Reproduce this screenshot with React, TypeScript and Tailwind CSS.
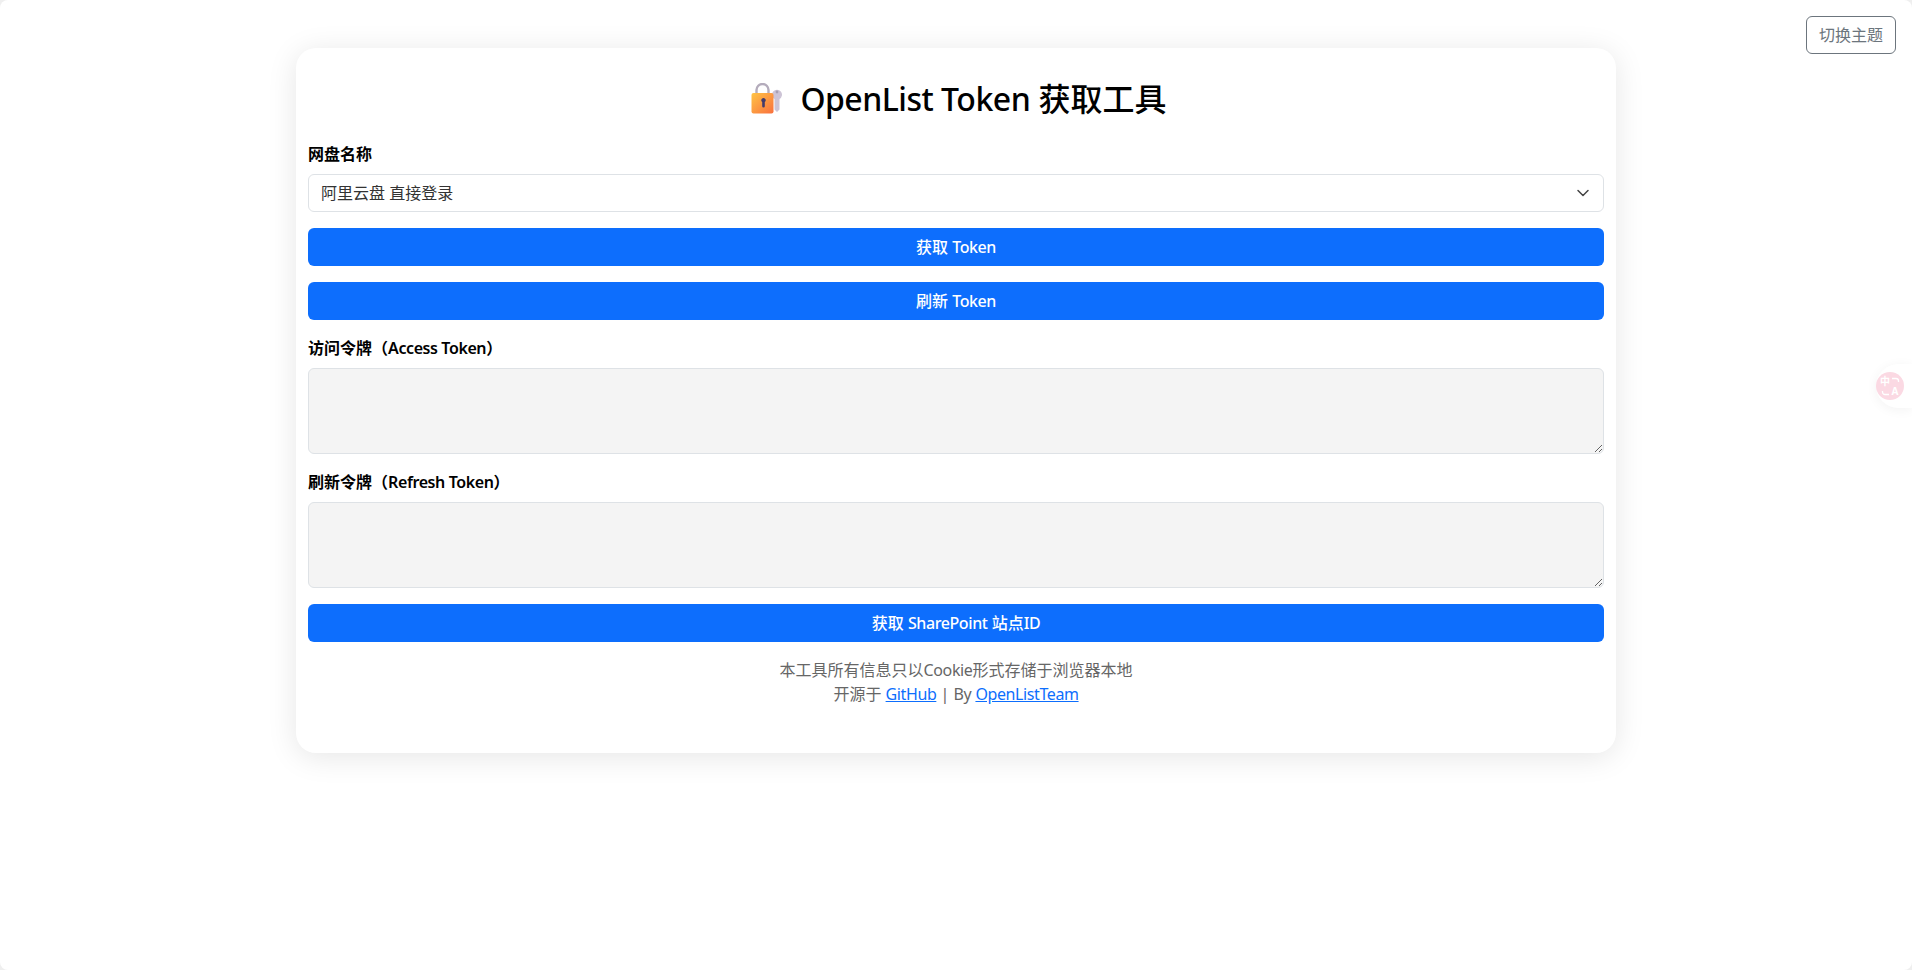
import React from "react";

function LockKey() {
  return (
    <svg width="32" height="32" viewBox="0 0 32 32" className="shrink-0">
      <defs>
        <linearGradient id="lockBody" x1="0" y1="0" x2="1" y2="1">
          <stop offset="0" stopColor="#ffc445" />
          <stop offset="1" stopColor="#f9703e" />
        </linearGradient>
      </defs>
      <path d="M5.5 12V7a6 6 0 0 1 12 0v5" fill="none" stroke="#b4acbc" strokeWidth="2.4" />
      <path d="M23.5 16a5 5 0 1 1 5 0v10.5L26 29l-2.5-2.5z" fill="#cdc4d6" />
      <circle cx="26" cy="9" r="1.4" fill="#a79fb3" />
      <rect x="0.5" y="10" width="22" height="20.5" rx="2" fill="url(#lockBody)" />
      <path d="M12.5 15a2.2 2.2 0 0 1 1.3 4v4.3a1.3 1.3 0 0 1-2.6 0V19a2.2 2.2 0 0 1 1.3-4z" fill="#433b6b" />
    </svg>
  );
}

function L({ children }: { children: React.ReactNode }) {
  return <span className="tracking-[-0.4px]">{children}</span>;
}

function TokenBox({ label, latin }: { label: string; latin: string }) {
  return (
    <div className="mb-[16px]">
      <label className="block h-[24px] mb-[8px] text-[16px] leading-[24px] font-semibold text-black">
        {label}（<L>{latin}</L>）
      </label>
      <textarea
        disabled
        className="block w-full h-[86px] rounded-[6px] border border-[#dee2e6] bg-[#f4f4f4] px-[12px] py-[6px] text-[16px]"
      />
    </div>
  );
}

function PrimaryButton({ children }: { children: React.ReactNode }) {
  return (
    <button className="block w-full h-[38px] rounded-[6px] bg-[#0d6efd] text-white text-[16px] font-medium leading-[38px]">
      {children}
    </button>
  );
}

export default function App() {
  return (
    <div className="bg-[#efefef]">
      <div className="relative min-h-[970px] rounded-[8px] bg-white overflow-hidden text-[#212529] font-['Noto_Sans','Noto_Sans_CJK_SC',sans-serif]">
        <button className="absolute top-[16px] right-[16px] w-[90px] h-[38px] rounded-[6px] border border-[#6c757d] text-[#6c757d] text-[16px]">
          切换主题
        </button>

        <div className="absolute top-[364px] right-0 w-[36px] h-[44px] rounded-l-full bg-white shadow-[0_2px_12px_rgba(0,0,0,0.05)] flex items-center">
          <div className="w-[28px] h-[28px] rounded-full bg-[#fbd9e3] grid grid-cols-2 place-items-center px-[4px] py-[4px] text-white text-[10px] leading-[10px] font-bold">
            <span>中</span>
            <svg width="9" height="9" viewBox="0 0 9 9" fill="none">
              <path d="M1 1.500h4a2.500 2.500 0 0 1 2.500 2.500v1" stroke="#ffffff" strokeWidth="1.3" />
            </svg>
            <svg width="9" height="9" viewBox="0 0 9 9" fill="none">
              <path d="M8 7.500H4A2.500 2.500 0 0 1 1.500 5V4" stroke="#ffffff" strokeWidth="1.3" />
            </svg>
            <span>A</span>
          </div>
        </div>

        <main className="w-[1320px] mx-auto pt-[48px]">
          <div className="h-[705px] rounded-[20px] bg-white px-[12px] shadow-[0_4px_30px_rgba(0,0,0,0.1)]">
            <h1 className="flex items-center justify-center gap-[17px] pl-[6px] pt-[10px] h-[92px] text-[32px] leading-[44px] font-medium text-black">
              <LockKey />
              <span>
                <span className="tracking-[-0.5px]">OpenList Token</span> 获取工具
              </span>
            </h1>

            <label className="block mt-[2px] h-[24px] mb-[8px] text-[16px] leading-[24px] font-semibold text-black">
              网盘名称
            </label>
            <div className="relative mb-[16px]">
              <select className="block w-full h-[38px] appearance-none rounded-[6px] border border-[#dee2e6] bg-white pl-[12px] pr-[36px] text-[16px] text-[#333333]">
                <option>阿里云盘 直接登录</option>
              </select>
              <svg
                className="absolute right-[13px] top-[11px] pointer-events-none"
                width="16"
                height="16"
                viewBox="0 0 16 16"
                fill="none"
              >
                <path d="M3 5.500 8 10.500l5-5" stroke="#444444" strokeWidth="1.5" strokeLinecap="round" strokeLinejoin="round" />
              </svg>
            </div>

            <div className="mb-[16px]">
              <PrimaryButton>获取 <L>Token</L></PrimaryButton>
            </div>
            <div className="mb-[16px]">
              <PrimaryButton>刷新 <L>Token</L></PrimaryButton>
            </div>

            <TokenBox label="访问令牌" latin="Access Token" />
            <TokenBox label="刷新令牌" latin="Refresh Token" />

            <PrimaryButton>获取 <L>SharePoint</L> 站点<L>ID</L></PrimaryButton>

            <div className="mt-[16px] text-center text-[16px] leading-[24px] text-[#666666]">
              <div>本工具所有信息只以<L>Cookie</L>形式存储于浏览器本地</div>
              <div>
                开源于{" "}
                <a href="#" className="text-[#0d6efd] underline tracking-[-0.4px]">GitHub</a>
                {" "}| <L>By</L>{" "}
                <a href="#" className="text-[#0d6efd] underline tracking-[-0.4px]">OpenListTeam</a>
              </div>
            </div>
          </div>
        </main>
      </div>
    </div>
  );
}
